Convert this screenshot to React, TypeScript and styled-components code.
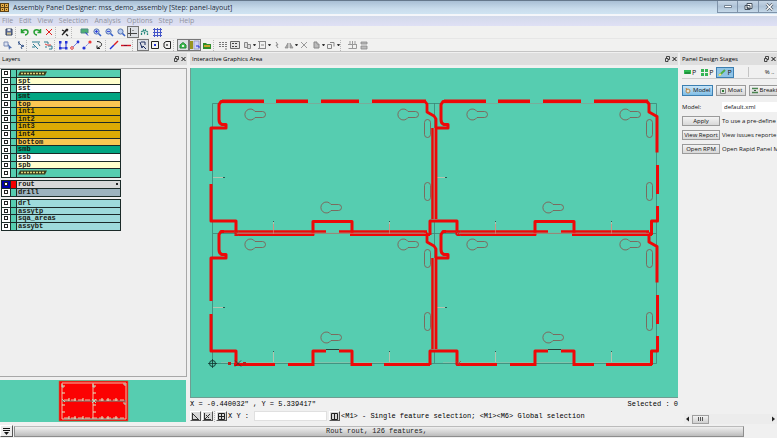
import React from "react";
import styled, { createGlobalStyle } from "styled-components";

const TEAL = "#56cdb0";
const RED = "#ee0808";
const MONO = '"Liberation Mono", monospace';
const UI = '"Open Sans", "Noto Sans", sans-serif';

const GlobalStyle = createGlobalStyle`
  * { box-sizing: border-box; }
  body { margin: 0; overflow: hidden; background: #f0f0f0; color: #222; font-family: ${UI}; font-size: 7px; line-height: 10px; }
  button, input { font: inherit; color: inherit; margin: 0; }
  svg { display: block; }
`;

/* ---------- window frame ---------- */

const Page = styled.div`
  height: 100vh;
  display: flex;
  flex-direction: column;
  overflow: hidden;
`;

const TitleBar = styled.header`
  display: flex;
  align-items: center;
  height: 14px;
  flex: none;
  border-top: 1px solid #66788c;
  background: linear-gradient(#a9bfd5, #c9dcec 60%, #cfe4f2);
`;

const WindowTitle = styled.h1`
  flex: 1;
  margin: 0 0 0 3px;
  font-size: 7px;
  line-height: 12px;
  font-weight: 400;
  color: #1c2a3a;
  white-space: nowrap;
`;

const WindowButtons = styled.div`
  display: flex;
  align-self: flex-start;
  margin-right: -3px;
`;

const WindowButton = styled.button`
  width: 21px;
  height: 12px;
  padding: 0;
  display: grid;
  place-items: center;
  border: 1px solid #7f93aa;
  border-top: 0;
  border-left-width: 0;
  background: linear-gradient(#c5d5e5, #aec2d6 50%, #c4d8e9);
  &:first-child { border-left-width: 1px; }
`;

const MenuBar = styled.nav`
  display: flex;
  gap: 6px;
  height: 12px;
  flex: none;
  padding: 0 2px;
  border-top: 2px solid #f4f6fa;
  background: linear-gradient(#d2d9ea, #dfe0f5);
`;

const MenuItem = styled.button`
  padding: 0;
  border: 0;
  background: none;
  font-size: 7px;
  line-height: 8px;
  color: #92949f;
`;

const ToolBar = styled.div<{ $inset: number }>`
  display: flex;
  align-items: center;
  height: 13px;
  flex: none;
  padding-left: ${(p) => p.$inset}px;
  border-bottom: 1px solid ${(p) => (p.$inset > 2 ? "#e6e6e6" : "#c4c4c4")};
  background: #f1f1f0;
`;

const ToolButton = styled.button<{ $on?: boolean }>`
  width: 12px;
  height: 12px;
  flex: none;
  padding: 0;
  display: grid;
  place-items: center;
  border: 0;
  background: ${(p) => (p.$on ? "#dcdfe4" : "none")};
  box-shadow: ${(p) => (p.$on ? "inset 0 0 0 1px #777" : "none")};
`;

const Divider = styled.span<{ $w: number }>`
  width: ${(p) => p.$w}px;
  height: 11px;
  flex: none;
  border-left: 1px dotted #b8b8b8;
`;

const Caret = styled.span`
  width: 3px;
  flex: none;
  border: solid transparent;
  border-width: 2px 1px 0;
  border-top-color: #333;
`;

/* ---------- docks ---------- */

const Workspace = styled.div`
  flex: 1;
  min-height: 0;
  display: grid;
  grid-template-columns: 187px minmax(0, 1fr) 97px;
  padding-top: 1px;
`;

const Dock = styled.section`
  display: flex;
  flex-direction: column;
  min-width: 0;
  min-height: 0;
  overflow: hidden;
`;

const CenterDock = styled(Dock)`
  padding: 0 2px 0 3px;
`;

const RightDock = styled(Dock)`
  padding-bottom: 1px;
`;

const DockTitle = styled.header`
  display: flex;
  align-items: center;
  justify-content: space-between;
  height: 12px;
  flex: none;
  margin-bottom: 3px;
  padding: 0 1px 0 2px;
  background: #dedede;
`;

const DockName = styled.h2`
  margin: 0;
  font-size: 6px;
  line-height: 12px;
  font-weight: 400;
  white-space: nowrap;
  color: #000;
`;

const DockControls = styled.div`
  display: flex;
  gap: 2px;
`;

const DockControl = styled.button`
  width: 5px;
  height: 6px;
  padding: 0;
  border: 0;
  background: none;
`;

const LayerFrame = styled.div`
  flex: 1;
  min-height: 0;
  padding: 0 0 0 1px;
  border: 1px solid #a8a8a8;
  border-left: 0;
  background: #efefef;
`;

const LayerGroup = styled.ul<{ $height: number }>`
  display: grid;
  grid-auto-rows: 1fr;
  width: 120px;
  height: ${(p) => p.$height}px;
  margin: 0 0 2px;
  padding: 0;
  list-style: none;
  border: 1px solid #1b2a28;
`;

const LayerRow = styled.li<{ $color: string }>`
  display: grid;
  grid-template-columns: 8px 7px 1fr;
  min-height: 0;
  border-bottom: 1px solid #1b2a28;
  background: ${(p) => p.$color};
  &:last-child { border-bottom: 0; }
`;

const LayerToggle = styled.span<{ $active?: boolean }>`
  display: grid;
  place-items: center;
  background: ${(p) => (p.$active ? "#0000b0" : "#fff")};
`;

const LayerCheck = styled.input`
  appearance: none;
  width: 4px;
  height: 4px;
  border: 1px solid #222;
  background: #fff;
`;

const LayerSwatch = styled.span<{ $active?: boolean }>`
  border: solid #1b2a28;
  border-width: 0 1px;
  background: ${(p) => (p.$active ? "#f50000" : TEAL)};
`;

const LayerName = styled.label`
  display: flex;
  align-items: flex-start;
  justify-content: space-between;
  padding: 0 2px 0 1px;
  font: 700 7px/6px ${MONO};
  color: #1a1a12;
`;

const Marker = styled.i`
  align-self: center;
  width: 2px;
  height: 2px;
  background: #222;
`;

const Preview = styled.div`
  height: 42px;
  flex: none;
  margin: 3px 1px 3px 0;
  background: ${TEAL};
`;

const Canvas = styled.div`
  flex: 1;
  min-height: 0;
  background: ${TEAL};
  border: solid #6f9d92;
  border-width: 0 0 1px 1px;
  & > svg { width: 100%; height: 100%; }
`;

const StatusLine = styled.div`
  display: flex;
  align-items: center;
  justify-content: space-between;
  height: 12px;
  flex: none;
  font: 7px/12px ${MONO};
  color: #000;
  white-space: pre;
`;

const CommandLine = styled(StatusLine)`
  justify-content: flex-start;
  gap: 1px;
  margin-bottom: 3px;
`;

const CommandButton = styled.button`
  width: 11px;
  height: 10px;
  flex: none;
  padding: 0;
  display: grid;
  place-items: center;
  border: 1px solid #fff;
  border-right-color: #555;
  border-bottom-color: #555;
  background: #d8d8d8;
`;

const CoordLabel = styled.label`
  display: flex;
  align-items: center;
  gap: 5px;
  margin-right: 1px;
`;

const CoordInput = styled.input`
  width: 73px;
  height: 10px;
  padding: 0 2px;
  border: 1px solid #e0e0e0;
  background: #fff;
`;

/* ---------- right panel ---------- */

const PanelBody = styled.div`
  flex: 1;
  display: flex;
  flex-direction: column;
  min-width: 0;
  padding-left: 2px;
  font-size: 6px;
  white-space: nowrap;
  color: #111;
`;

const StageTabs = styled.div`
  display: flex;
  align-items: center;
  gap: 2px;
  height: 13px;
  margin-top: -2px;
  border-bottom: 1px solid #ccc;
`;

const StageTab = styled.button<{ $on?: boolean }>`
  display: flex;
  align-items: center;
  gap: 1px;
  height: 11px;
  padding: 0 1px;
  border: ${(p) => (p.$on ? "1px solid #3c7fb1" : "0")};
  background: ${(p) => (p.$on ? "#8fc3e6" : "none")};
  font-size: 7px;
  line-height: 9px;
`;

const StageMore = styled.span`
  margin-left: 12px;
  padding-left: 16px;
  border-left: 1px solid #c4c4c4;
`;

const ModeRow = styled.div`
  display: flex;
  gap: 3px;
  margin: 6px 0;
`;

const ModeButton = styled.button<{ $on?: boolean }>`
  display: flex;
  align-items: center;
  justify-content: center;
  gap: 1px;
  height: 11px;
  min-width: 30px;
  flex: none;
  padding: 0 1px;
  border: 1px solid ${(p) => (p.$on ? "#3c7fb1" : "#9a9a9a")};
  background: ${(p) => (p.$on ? "linear-gradient(#c9e6f8, #7fbde6)" : "linear-gradient(#f4f4f4, #d6d6d6)")};
  line-height: 9px;
`;

const FormGrid = styled.div`
  display: grid;
  grid-template-columns: 38px minmax(0, 1fr);
  column-gap: 2px;
  row-gap: 4px;
  align-items: center;
`;

const FieldInput = styled.input`
  min-width: 0;
  height: 10px;
  padding: 0 2px;
  border: 0;
  background: #fff;
  line-height: 10px;
`;

const ActionButton = styled.button`
  height: 10px;
  padding: 0;
  border: 1px solid #9a9a9a;
  background: linear-gradient(#f4f4f4, #d8d8d8);
  line-height: 8px;
`;

const HScroll = styled.div`
  display: flex;
  align-items: center;
  height: 10px;
  margin: 0 0 0 4px;
  background: #ececec;
`;

const ScrollArrow = styled.button<{ $right?: boolean }>`
  width: 7px;
  height: 10px;
  padding: 0;
  border: 0;
  background: none;
  transform: ${(p) => (p.$right ? "rotate(180deg)" : "none")};
`;

const ScrollThumb = styled.div`
  width: 17px;
  height: 9px;
  margin: 0 auto 0 1px;
  display: flex;
  justify-content: center;
  align-items: center;
  gap: 1px;
  border: 1px solid #a0a0a0;
  background: linear-gradient(#f2f2f2, #cfcfcf);
`;

const Grip = styled.i`
  width: 1px;
  height: 4px;
  background: #555;
`;

/* ---------- footer ---------- */

const Footer = styled.footer`
  display: flex;
  align-items: center;
  height: 13px;
  flex: none;
  gap: 1px;
  padding: 0 33px 1px 0;
`;

const FooterButton = styled(CommandButton)`
  width: 13px;
  height: 12px;
  background: #ececec;
`;

const Message = styled.output`
  flex: 1;
  height: 11px;
  padding-right: 5px;
  text-align: center;
  border: 1px solid #8d8d8d;
  border-top-color: #bbb;
  background: linear-gradient(#efefef, #d6d6d6 50%, #bcbcbc);
  font: 7px/9px ${MONO};
`;

/* ---------- icons, drawn on a 12 × 12 grid ---------- */

const G = "#28a035";
const B = "#2433d8";
const K = "#222";

const magnifier = (
  <>
    <circle cx="5.5" cy="5.5" r="2.6" fill="#b8cdf0" stroke="#5470b0" />
    <path d="M7.5 7.5 10 10" stroke="#3560c8" strokeWidth="1.6" />
  </>
);

const ICONS: Record<string, React.ReactNode> = {
  save: <><path d="M3 3h6v6H3z" fill="#6574a0" stroke="#32405f" /><path d="M4 6.5h4v2H4z" fill="#d8c890" /><path d="M4.5 3v2h3V3" fill="#e5e8ef" /></>,
  undo: <path d="M2.5 3v3.500h3M3 6c1-3 6-3 6 0 0 2-2 3-3 3" fill="none" stroke={G} strokeWidth="1.5" />,
  redo: <path d="M9.500 3v3.500h-3M9 6C8 3 3 3 3 6c0 2 2 3 3 3" fill="none" stroke={G} strokeWidth="1.5" />,
  delete: <path d="M3 3l6 6M9 3 3 9" stroke="#e02020" />,
  tool: <path d="M3 9l6-6M3 4l2 1m2-2 2 2M4 8l3-4M7 8l2 2" stroke={K} strokeWidth="1.3" fill="none" />,
  fit: <><path d="M2 3h7v4H2z" fill="#4eb074" stroke="#4a8a84" /><path d="M6.500 6.500 9 9.500" stroke={B} /></>,
  zoomIn: <>{magnifier}<path d="M4 5.500h3M5.500 4v3" stroke={B} strokeWidth=".8" /></>,
  zoomOut: <>{magnifier}<path d="M4 5.500h3" stroke={B} strokeWidth=".8" /></>,
  zoom: magnifier,
  axes: <path d="M3.500 2v8M1 7.500h9M6 4v1" stroke="#444" fill="none" />,
  find: <path d="M2.500 9V6l2-2 1 3 1-3 2 2v3" fill="none" stroke="#26877c" strokeWidth="1.3" strokeDasharray="2 .7" />,
  grid: <path d="M2 3.500h9M2 6.500h9M2 9.500h9M3.500 2v9M6.500 2v9M9.500 2v9" stroke="#4556c8" />,
  pick: <><path d="M2 3h4v4H2z" fill="#dce2f2" stroke="#7d8db5" /><path d="M6 5l4 4-2 .3L7 11z" fill="#4f6fae" /></>,
  wand: <path d="M4 3l4 4M5 2v4M8 6l2 1-3 1 1 2" stroke="#35558a" fill="none" />,
  layerA: <path d="M2 3h8M3 5l5 5M2 8h3m3-4 2 3" stroke="#2b7d92" fill="none" />,
  layerB: <><path d="M2 3h4v2m0 2h4v3H7M3 8h2" stroke="#2b7d92" fill="none" /><path d="M5 6h4M3 5l2 1" stroke="#d84040" /></>,
  poly: <><path d="M3 2v7h6V4" fill="none" stroke={B} /><path d="M2 2h2.500v2.500H2zM2 8h2.500v2.500H2zM8 8h2.500v2.500H8zM8 2h2.500v2.500H8z" fill={B} /></>,
  node: <><path d="M3 9l6-6" stroke="#7080e0" /><circle cx="3" cy="9" r="1.300" fill="#fff" stroke="#d33" /><circle cx="9" cy="3" r="1.400" fill={B} /></>,
  nodes: <><path d="M3 9l6-6" stroke="#7080e0" strokeDasharray="2 1" /><circle cx="3" cy="9" r="1.600" fill={B} /><circle cx="9" cy="3" r="1.600" fill="#e33" /></>,
  arc: <path d="M4 2.500c5 0 6 4 2.500 5.500L4 9.500m0-3v3h3" fill="none" stroke={K} />,
  slope: <><path d="M2 10 6 6" stroke={B} strokeWidth="1.400" /><path d="M6 6l4-4" stroke="#e02020" strokeWidth="1.400" /></>,
  line: <><path d="M1 6.500h10" stroke="#d81020" strokeWidth="1.400" /><path d="M4 6.500h3" stroke="#7a1030" /></>,
  cursor: <path d="M3 3l2 6 1-2 3 3M4 3h4v3" fill="none" stroke="#1a2c60" />,
  square: <><path d="M2.500 2.500h7v7h-7z" fill="none" stroke={K} /><path d="M5 5h2v2H5z" fill={B} /></>,
  loop: <><path d="M3 4l2-1.500h4.500v7H5L3 8z" fill="none" stroke={K} /><path d="M5 5h2v2H5z" fill="#777" /></>,
  home: <><path d="M3 6l3-2.500L9 6v3H3z" fill="#3ec352" stroke="#238238" /><path d="M5 6h2v2H5z" fill="#e7efe7" /></>,
  panes: <><path d="M1 2h3v8H1z" fill="#98941e" /><path d="M5 2h5v8H5z" fill="#cfd2f5" stroke="#8080b0" strokeWidth=".6" /><path d="M7 7h3v2" stroke={B} fill="none" /></>,
  folder: <><path d="M2 4h3l1 1h4v5H2z" fill="#2d8c28" /><path d="M3 6h6v2H3z" fill="#c7a52c" /></>,
  dots: <path d="M2 3.500h9M2 5.500h9M2 7.500h9M8 10h3" stroke="#777" strokeDasharray="2 1" />,
  table: <><path d="M1.500 2.500h9v7h-9z" fill="#e4e4e4" stroke="#666" /><path d="M3 4.500h6M3 7.500h6" stroke="#444" strokeDasharray="2 1" /></>,
  copy: <path d="M3.500 3.500h3v5h-3zM6.500 5.500h3v4h-3z" fill="#ddd" stroke="#888" />,
  frame: <path d="M2 2.500h8M2 9.500h8M3.500 2v8M9.500 2v8M5 6h3" stroke="#888" fill="none" />,
  pin: <path d="M5 3l2 3H5l2 3" stroke="#888" fill="none" />,
  mirror: <path d="M2 9l3-5v5zm8 0L7 4v5z" fill="#aaa" stroke="#888" strokeWidth=".7" />,
  cross: <path d="M3 3l6 6M9 3 3 9" stroke="#999" />,
  paste: <path d="M4 3h3v2h2v4H4z" fill="#bbb" stroke="#888" />,
  stack: <path d="M2.500 5.500h4v4h-4zM5 3.500h4v4" fill="none" stroke="#888" />,
  align: <path d="M2 5.500h9M2.500 9.500h8V5M4 2v3M6.500 2v7M9 2v3" fill="none" stroke="#999" />,
  list: <path d="M3 3h6v2H3zM3 7h6v3H3z" fill="#bbb" stroke="#888" strokeWidth=".8" />,
};

const Icon = ({ name }: { name: string }) => (
  <svg width="12" height="12" viewBox="0 0 12 12" aria-hidden="true">{ICONS[name]}</svg>
);

type Tool = string | number;

/* Strings are tools ("!" = pressed, "^" = with a menu caret); numbers are divider widths. */
const FILE_TOOLS: Tool[] = ["save", 4, "undo", "redo", "delete", 4, "tool", 8, "fit", "zoomIn", "zoomOut", "zoom", "axes!", "find", "grid"];
const EDIT_TOOLS: Tool[] = [
  "pick", "wand", 4, "layerA", "layerB", 3, "poly", "node", "nodes", "arc", 3, "slope", "line", 5,
  "cursor!", "square", "loop", 4, "home!", "panes!", "folder", 4, "dots", "table", "copy^", "frame^", "pin",
  "mirror^", "cross", "paste^", "stack^", 6, "align", "list",
];

const Tools = ({ items }: { items: Tool[] }) => (
  <>
    {items.map((item, i) => {
      if (typeof item === "number") return <Divider key={i} $w={item} />;
      const name = item.replace(/[!^]/, "");
      return (
        <React.Fragment key={i}>
          <ToolButton $on={item.endsWith("!")} aria-label={name}><Icon name={name} /></ToolButton>
          {item.endsWith("^") && <Caret />}
        </React.Fragment>
      );
    })}
  </>
);

const DockHeader = ({ title }: { title: string }) => (
  <DockTitle>
    <DockName>{title}</DockName>
    <DockControls>
      <DockControl aria-label="Float">
        <svg width="5" height="6" viewBox="0 0 5 6"><path d="M1.500 2V.5h3v3H3M.5 2.500h2.500v3H.5z" fill="none" stroke="#222" strokeWidth=".8" /></svg>
      </DockControl>
      <DockControl aria-label="Close">
        <svg width="5" height="6" viewBox="0 0 5 6"><path d="M.5 1l4 4m0-4-4 4" stroke="#111" /></svg>
      </DockControl>
    </DockControls>
  </DockTitle>
);

/* ---------- layers ---------- */

const GOLD = "#dbab04";
const AMBER = "#fac753";
const CREAM = "#ffffcc";
const MASK = "#02a582";
const SKY = "#9edbdb";

type Layer = [name: string, color: string];
const LAYER_GROUPS: { height: number; layers: Layer[] }[] = [
  {
    height: 109,
    layers: [
      ["", TEAL], ["spt", CREAM], ["sst", "#fff"], ["smt", MASK], ["top", AMBER], ["int1", GOLD], ["int2", GOLD],
      ["int3", GOLD], ["int4", GOLD], ["bottom", AMBER], ["smb", MASK], ["ssb", "#fff"], ["spb", CREAM], ["", TEAL],
    ],
  },
  { height: 17, layers: [["rout", "#d8d8d8"], ["drill", "#9db3bf"]] },
  { height: 32, layers: [["drl", SKY], ["assytp", SKY], ["sqa_areas", SKY], ["assybt", SKY]] },
];

const Hatch = () => (
  <svg width="30" height="6" viewBox="0 0 30 6">
    <path d="M2 1.500h27l-2 4H0z" fill="#3c3c1c" />
    <path d="M3 3.500h24" stroke="#d8cf78" strokeWidth="1.500" strokeDasharray="2 1" />
  </svg>
);

const LayerList = () => (
  <LayerFrame>
    {LAYER_GROUPS.map((group, g) => (
      <LayerGroup key={g} $height={group.height}>
        {group.layers.map(([name, color], i) => {
          const active = name === "rout";
          const id = `layer-${g}-${i}`;
          return (
            <LayerRow key={id} $color={color}>
              <LayerToggle $active={active}><LayerCheck type="checkbox" id={id} aria-label={name || "board side"} /></LayerToggle>
              <LayerSwatch $active={active} />
              <LayerName htmlFor={id}>{name || <Hatch />}{active && <Marker />}</LayerName>
            </LayerRow>
          );
        })}
      </LayerGroup>
    ))}
  </LayerFrame>
);

const PreviewMap = () => (
  <Preview>
    <svg width="100%" height="42" viewBox="0 0 186 42">
      <path d="M59 1h69v40H59z" fill="#fb0202" stroke="#b9704c" strokeWidth=".6" />
      <g fill="none" stroke="#f3b9a4">
        <path d="M62 3h64v36H62zM93 3v36" />
        <path d="M62 21h64M64 39h60" stroke="#4f9f90" />
        <path d="M64 20h60M64 38h60" strokeDasharray="5 2" />
        <path d="M62 6h3M62 13h3M62 25h3M62 32h3M93 6h3M93 13h3M93 25h3M93 32h3M69 18v3M75 18v3M83 18v3M102 18v3M108 18v3M116 18v3M69 36v3M75 36v3M83 36v3M102 36v3M108 36v3M116 36v3" stroke="#dff0c6" />
        <path d="M92 19l4 4m0-4-4 4M62 19l3 3M62 4v3h2M93 4v3h2M123 4h2v2M123 23h2v2" stroke="#a8e0c4" />
      </g>
    </svg>
  </Preview>
);

/* ---------- board drawing ---------- */

const COLUMNS = [0, 222];
const ROWS = [0, 130];

const Keyhole = ({ x, y }: { x: number; y: number }) => (
  <path d={`M${x + 5} ${y - 3}a5.500 5.500 0 1 0 0 6h7.500a3 3 0 0 0 0-6z`} />
);

const BoardDetails = ({ x, y }: { x: number; y: number }) => (
  <g transform={`translate(${x} ${y})`} fill="none">
    <g stroke="#85524a" strokeWidth=".8">
      <Keyhole x={250} y={114.5} />
      <Keyhole x={403} y={114.5} />
      <Keyhole x={326} y={207.5} />
      <rect x="424.500" y="119.500" width="6" height="18" rx="3" />
      <rect x="424.500" y="182.500" width="6" height="18" rx="3" />
    </g>
    <path d="M213 177.500h11M273.500 221v11M389.500 221v11" stroke="#b3c4ae" />
    <path d="M223 177.500h2M273.500 221v1M389.500 221v1" stroke="#2a5a50" />
  </g>
);

/* Left hook, left edge and the notch at the lower left corner. */
const LeftEdge = ({ x, y, split }: { x: number; y: number; split: boolean }) => (
  <path
    transform={`translate(${x} ${y})`}
    d={`M224 101.500h-3l-2 3v15q0 4 3 5h4v3.500${split ? "h-15v43M211 184v37h25v14" : "h-12"}`}
  />
);

const BoardCanvas = () => (
  <Canvas>
    <svg viewBox="191 68 487 329" preserveAspectRatio="xMidYMid meet" role="img" aria-label="Panel of four boards">
      <g fill="none">
        <path d="M212.500 103.500h444v260h-444zM213 233.500h443M434.500 103v260" stroke="#3d8475" strokeWidth=".8" />
        <path d="M221 103.500h205M443 103.500h206M221 362.500h205M443 362.500h206" stroke="#9ec0ab" strokeWidth=".6" />
      </g>
      {ROWS.map((y) => COLUMNS.map((x) => <BoardDetails key={`${x}-${y}`} x={x} y={y} />))}

      <g fill="none" stroke={RED} strokeWidth="3" strokeLinejoin="round">
        {ROWS.map((y) => (
          <React.Fragment key={y}>
            <LeftEdge x={0} y={y} split />
            <LeftEdge x={222} y={y} split={false} />
            <g transform={`translate(0 ${y})`}>
              <path d="M425 101.500l2 2.500v8l7 4 2 3v100" strokeWidth="2.800" />
              <path d="M432.500 128v91" strokeWidth="2.500" />
              <path d="M430 235v-14h27v14" />
              <path d="M647 101.500l2 2.500v8l8 4.500v36M657.500 165v29M657.500 206v15h-6v14" />
            </g>
          </React.Fragment>
        ))}
        {COLUMNS.map((x) => (
          <g key={x} transform={`translate(${x} 0)`}>
            <path d="M222 101.300h42M276 101.300h32M321 101.300h38M372 101.300h54" strokeWidth="3.600" />
            <path d="M313 235.500v-14h39v14M313 366v-15h13M339 351h13v15" />
            <path d="M222 231.500h104M339 231.500h88M235 234.800h79M350 234.800h80" strokeWidth="2.400" />
            <path d="M234 364.500h41M288 364.500h26M351 364.500h21M384 364.500h46" />
            <path d="M326 349.500h13" stroke="#2b3f38" strokeWidth="1" />
          </g>
        ))}
      </g>

      <g fill="none" stroke="#d98273" strokeWidth=".7">
        <path d="M236 233.300h190M457 233.300h192M434.300 128v92M434.300 258v92" />
        <path d="M273.500 224v10M389.500 224v10M495.500 224v10M611.500 224v10" />
        <path d="M234 231l5 5m0-5-5 5M456 231l5 5m0-5-5 5M456 361l5 5m0-5-5 5" stroke="#a04538" />
      </g>
      <g fill="none" stroke="#123a32">
        <circle cx="212.500" cy="363.500" r="3" />
        <path d="M212.500 359v9M208 363.500h9M235 360.500l6 6m0-6-6 6" strokeWidth=".8" />
      </g>
      <path d="M228 362h3v3h-3zM243 362h3v3h-3z" fill="#b8201a" />
    </svg>
  </Canvas>
);

/* ---------- stages panel ---------- */

const Chip = ({ children }: { children: React.ReactNode }) => (
  <svg width="8" height="7" viewBox="0 0 8 7" aria-hidden="true">{children}</svg>
);

const StagesPanel = () => (
  <RightDock>
    <DockHeader title="Panel Design Stages" />
    <PanelBody>
      <StageTabs>
        <StageTab aria-label="Panel stage"><Chip><path d="M1 1h7v4H1z" fill="#2fba52" /><path d="M2 4h5" stroke="#126b28" /></Chip>P</StageTab>
        <StageTab aria-label="Array stage"><Chip><path d="M1 0h3v3H1zM5 0h3v3H5zM1 4h3v3H1zM5 4h3v3H5z" fill="#35b455" /></Chip>P</StageTab>
        <StageTab $on aria-label="Edit stage"><Chip><path d="M1 6.500 7 1" stroke="#4fae45" strokeWidth="2" /><path d="M1 6.500 3 5" stroke="#f3e27c" strokeWidth="2" /></Chip>P</StageTab>
        <StageMore>% ..</StageMore>
      </StageTabs>
      <ModeRow>
        <ModeButton $on><Chip><circle cx="4" cy="4" r="2" fill="#e9e5da" stroke="#b28a50" /><path d="M2 1l1 2" stroke="#c97a30" /></Chip>Model</ModeButton>
        <ModeButton><Chip><path d="M1.500 1.500h5v5h-5z" fill="#dfe8df" stroke="#888" /><path d="M3 3h2v2H3z" fill="#2d7a36" /></Chip>Moat</ModeButton>
        <ModeButton><Chip><path d="M1 1.500h6M1 5.500h6" stroke="#49844f" strokeWidth="1.500" /><path d="M3 3.500h2" stroke="#444" /></Chip>Breakta</ModeButton>
      </ModeRow>
      <FormGrid>
        <label htmlFor="model">Model:</label>
        <FieldInput id="model" defaultValue="default.xml" />
        <ActionButton>Apply</ActionButton>
        <span>To use a pre-define</span>
        <ActionButton>View Report</ActionButton>
        <span>View issues reporte</span>
        <ActionButton>Open RPM</ActionButton>
        <span>Open Rapid Panel M</span>
      </FormGrid>
    </PanelBody>
    <HScroll>
      <ScrollArrow aria-label="Scroll left"><svg width="7" height="10" viewBox="0 0 7 10"><path d="M5 2.500v5L2 5z" fill="#222" /></svg></ScrollArrow>
      <ScrollThumb><Grip /><Grip /><Grip /></ScrollThumb>
      <ScrollArrow $right aria-label="Scroll right"><svg width="7" height="10" viewBox="0 0 7 10"><path d="M5 2.500v5L2 5z" fill="#222" /></svg></ScrollArrow>
    </HScroll>
  </RightDock>
);

const MENUS = ["File", "Edit", "View", "Selection", "Analysis", "Options", "Step", "Help"];

export default function App() {
  return (
    <Page>
      <GlobalStyle />
      <TitleBar>
        <svg width="10" height="10" viewBox="0 0 10 10" aria-hidden="true">
          <path d="M0 0h9v9H0z" fill="#5d4318" />
          <path d="M1 1h3v3H1zM5 1h3v3H5zM1 5h3v3H1zM5 5h3v3H5z" fill="#e7ad45" />
          <path d="M2 2h1v1H2zM6 2h1v1H6zM2 6h1v1H2zM6 6h1v1H6z" fill="#4b3510" />
        </svg>
        <WindowTitle>Assembly Panel Designer: mss_demo_assembly [Step: panel-layout]</WindowTitle>
        <WindowButtons>
          <WindowButton aria-label="Minimize"><svg width="8" height="5" viewBox="0 0 8 5"><path d="M.5 1.500h7v2h-7z" fill="#fff" stroke="#5b6b7c" strokeWidth=".8" /></svg></WindowButton>
          <WindowButton aria-label="Restore"><svg width="9" height="9" viewBox="0 0 9 9"><path d="M3 1.500h5v5H3zM1 3.500h5v4H1z" fill="#fff" stroke="#46525f" /><path d="M3 5.500h1.500" stroke="#46525f" /></svg></WindowButton>
          <WindowButton aria-label="Close"><svg width="9" height="8" viewBox="0 0 9 8"><path d="M1.500 1l6 6m0-6-6 6" stroke="#4d5966" strokeWidth="2.600" /><path d="M1.500 1l6 6m0-6-6 6" stroke="#fff" strokeWidth="1.200" /></svg></WindowButton>
        </WindowButtons>
      </TitleBar>
      <MenuBar>{MENUS.map((m) => <MenuItem key={m}>{m}</MenuItem>)}</MenuBar>
      <ToolBar $inset={3}><Tools items={FILE_TOOLS} /></ToolBar>
      <ToolBar $inset={2}><Tools items={EDIT_TOOLS} /></ToolBar>

      <Workspace>
        <Dock>
          <DockHeader title="Layers" />
          <LayerList />
          <PreviewMap />
        </Dock>
        <CenterDock>
          <DockHeader title="Interactive Graphics Area" />
          <BoardCanvas />
          <StatusLine>
            <span>{'X = -0.440032" , Y = 5.339417"'}</span>
            <span>Selected : 0</span>
          </StatusLine>
          <CommandLine>
            <CommandButton aria-label="Snap to line"><svg width="7" height="7" viewBox="0 0 7 7"><path d="M.5 0v7M0 6.500h7M1 1l5 5" stroke="#333" fill="none" /></svg></CommandButton>
            <CommandButton aria-label="Snap to point"><svg width="7" height="7" viewBox="0 0 7 7"><path d="M.5 0v7M0 6.500h7M1 6l5-5M2 2l3 3" stroke="#333" fill="none" /></svg></CommandButton>
            <Divider $w={1} />
            <CommandButton aria-label="Grid"><svg width="7" height="7" viewBox="0 0 7 7"><path d="M.5.5h6v6h-6zM3.500 0v7M0 3.500h7" stroke="#222" fill="none" /></svg></CommandButton>
            <CoordLabel>X Y :<CoordInput aria-label="Coordinates" /></CoordLabel>
            <CommandButton aria-label="Split view"><svg width="7" height="7" viewBox="0 0 7 7"><path d="M.5.5h6v6h-6zM3.500 0v7" stroke="#222" fill="none" /></svg></CommandButton>
            <span>{"<M1> - Single feature selection; <M1><M6> Global selection"}</span>
          </CommandLine>
        </CenterDock>
        <StagesPanel />
      </Workspace>

      <Footer>
        <FooterButton aria-label="Messages"><svg width="9" height="8" viewBox="0 0 9 8"><path d="M1 1.500h7M1 3.500h7" stroke="#111" /><path d="M2 5h5L4.500 8z" fill="#111" /></svg></FooterButton>
        <Message>Rout rout, 126 features,</Message>
      </Footer>
    </Page>
  );
}
